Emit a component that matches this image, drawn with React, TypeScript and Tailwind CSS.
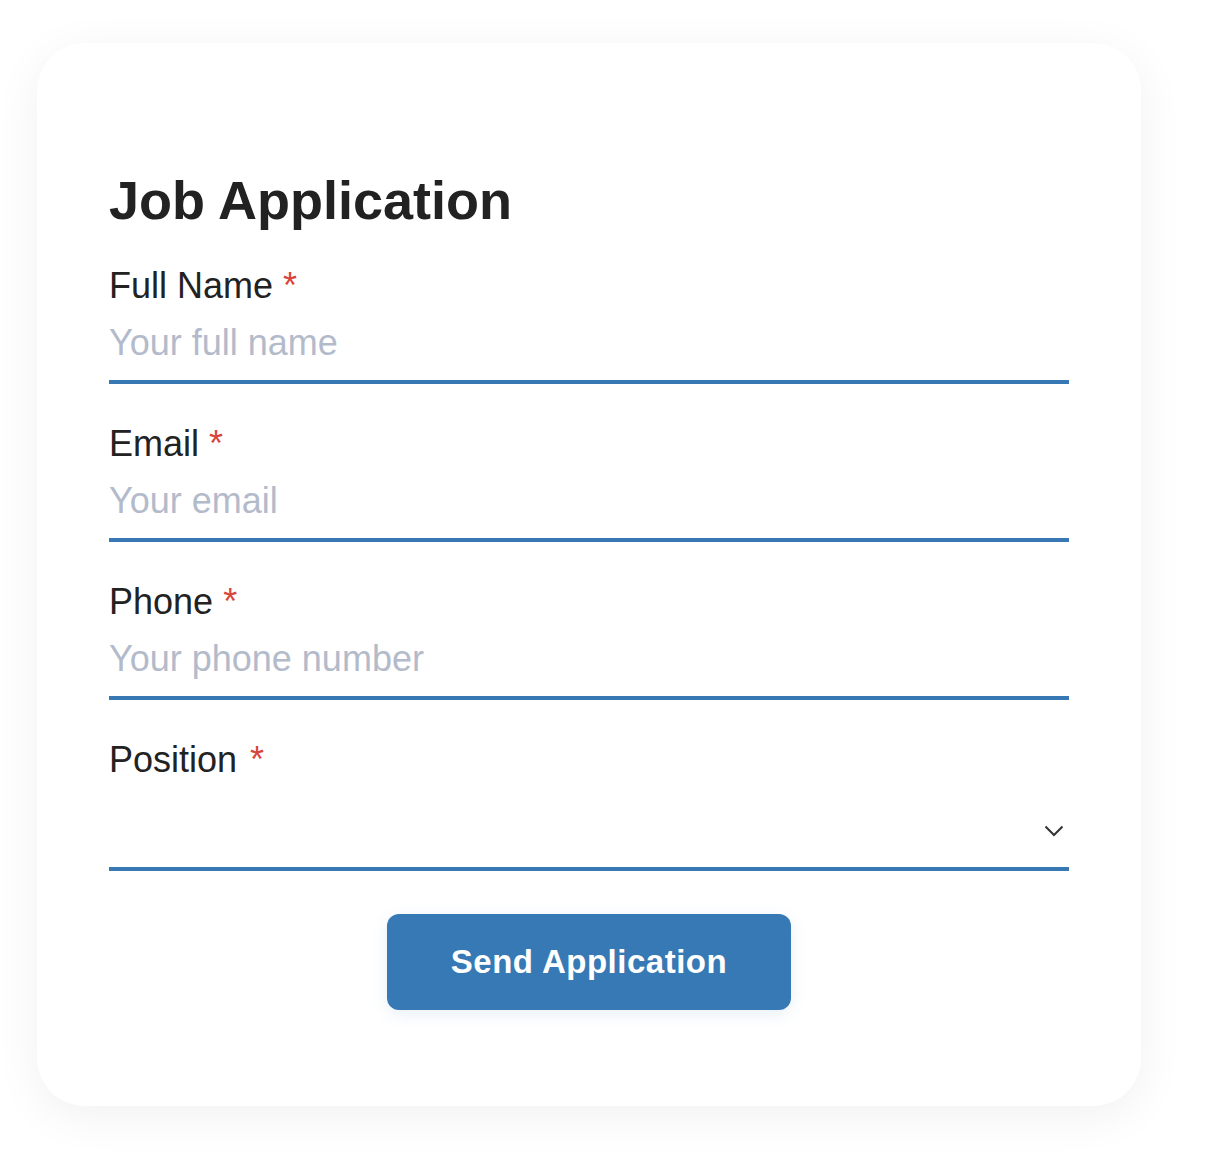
import React from "react";

const font = { fontFamily: '"Liberation Sans", Arial, Helvetica, sans-serif' };

function Field({ label, placeholder }: { label: string; placeholder: string }) {
  return (
    <div className="flex flex-col">
      <label className="pb-[4px] text-[36px] leading-[39px] text-[#222222]">
        {label} <span className="text-[#d9453a]">*</span>
      </label>
      <input
        type="text"
        placeholder={placeholder}
        className="w-full border-0 border-b-4 border-[#3778b5] bg-transparent pt-[13px] pb-[17px] text-[36px] leading-[41px] text-[#222222] outline-none placeholder:text-[#b3bbcb]"
        style={font}
      />
    </div>
  );
}

export default function App() {
  return (
    <div className="min-h-[1154px] w-[1210px] bg-white" style={font}>
      <div className="pt-[43px] pl-[37px]">
        <div className="w-[1104px] rounded-[48px] bg-white px-[72px] pt-[125px] pb-[96px] shadow-[0_10px_48px_rgba(0,0,0,0.06)]">
          <h1 className="text-[54px] font-bold leading-[65px] text-[#222222]">Job Application</h1>
          <form className="mt-[33px] flex flex-col gap-[40px]" onSubmit={(e) => e.preventDefault()}>
            <Field label="Full Name" placeholder="Your full name" />
            <Field label="Email" placeholder="Your email" />
            <Field label="Phone" placeholder="Your phone number" />
            <div className="flex flex-col">
              <label className="pb-[4px] text-[36px] leading-[39px] text-[#222222]">
                Position <span className="ml-[3px] text-[#d9453a]">*</span>
              </label>
              <div className="relative flex h-[88px] items-center border-b-4 border-[#3778b5]">
                <div className="flex-1" />
                <svg width="20" height="12" viewBox="0 0 20 12" className="mr-[5px] mt-[12px]">
                  <polyline points="1.5,1.5 10,10 18.5,1.5" fill="none" stroke="#333333" strokeWidth="2" />
                </svg>
              </div>
            </div>
            <div className="mt-[3px] flex justify-center">
              <button
                type="submit"
                className="h-[96px] w-[404px] rounded-[12px] bg-[#3779b5] text-[33px] font-bold tracking-[0.5px] text-white shadow-[0_4px_16px_rgba(55,121,181,0.12)]"
                style={font}
              >
                Send Application
              </button>
            </div>
          </form>
        </div>
      </div>
    </div>
  );
}
